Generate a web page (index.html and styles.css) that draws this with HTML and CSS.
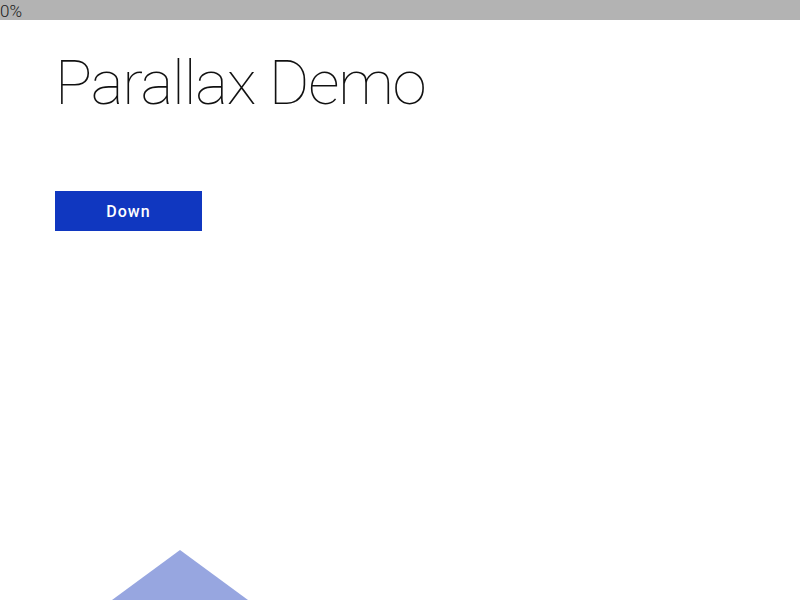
FILE: index.html
```html
<!DOCTYPE html>
<html>
<head>
<meta charset="utf-8">
<link rel="stylesheet" href="styles.css">
</head>
<body>
<div class="progress">0%</div>
<main class="content">
  <h1 class="title">Parallax Demo</h1>
  <button class="down">Down</button>
</main>
<svg class="shape" width="300" height="50" viewBox="0 0 300 50">
  <polygon points="150,0 286,100 14,100" fill="#97a6e0"/>
</svg>
</body>
</html>
```
FILE: styles.css
```css
html, body {
  margin: 0;
  padding: 0;
  background: #fff;
  overflow: hidden;
  height: 600px;
}
body {
  font-family: Roboto, "Liberation Sans", sans-serif;
  position: relative;
}
.progress {
  height: 20px;
  background: #b3b3b3;
  color: #1a1a1a;
  font-size: 17px;
  font-weight: 300;
  line-height: 22px;
}
.content {
  padding: 0 0 0 55px;
}
.title {
  margin: 26px 0 0 0;
  font-weight: 100;
  font-size: 62px;
  line-height: 74px;
  color: #111;
  letter-spacing: -1.2px;
}
.down {
  margin-top: 71px;
  width: 147px;
  height: 40px;
  background: #1037c0;
  color: #fff;
  border: none;
  font-family: Roboto, "Open Sans", sans-serif;
  font-size: 16px;
  font-weight: 500;
  letter-spacing: 1px;
  padding: 0;
  display: block;
}
.shape {
  position: absolute;
  left: 30px;
  top: 550px;
}
```
